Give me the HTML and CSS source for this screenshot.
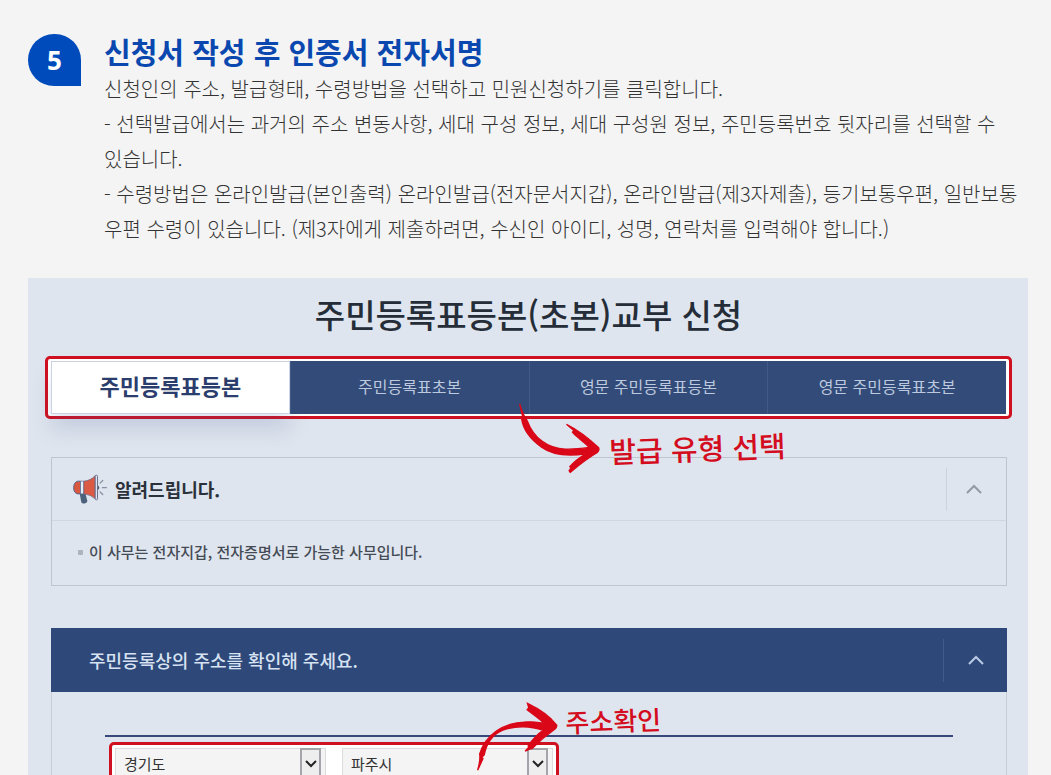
FILE: index.html
```html
<!DOCTYPE html>
<html lang="ko">
<head>
<meta charset="utf-8">
<meta name="viewport" content="width=device-width, initial-scale=1">
<title>신청서 작성 후 인증서 전자서명</title>
<link rel="stylesheet" href="styles.css">
</head>
<body>
<main class="guide">
  <section class="step">
    <span class="step-number">5</span>
    <div class="step-text">
      <h2 class="step-title">신청서 작성 후 인증서 전자서명</h2>
      <p>신청인의 주소, 발급형태, 수령방법을 선택하고 민원신청하기를 클릭합니다.</p>
      <p>- 선택발급에서는 과거의 주소 변동사항, 세대 구성 정보, 세대 구성원 정보, 주민등록번호 뒷자리를 선택할 수 <span class="keep">있습니다.</span></p>
      <p>- 수령방법은 온라인발급(본인출력) 온라인발급(전자문서지갑), 온라인발급(제3자제출), 등기보통우편, 일반보통우편 수령이 있습니다. (제3자에게 제출하려면, 수신인 아이디, 성명, 연락처를 입력해야 합니다.)</p>
    </div>
  </section>

  <section class="panel">
    <h1 class="panel-title">주민등록표등본(초본)교부 신청</h1>
    <div class="tabs-frame">
      <nav class="tabs">
        <button type="button" class="tab active">주민등록표등본</button>
        <button type="button" class="tab">주민등록표초본</button>
        <button type="button" class="tab">영문 주민등록표등본</button>
        <button type="button" class="tab">영문 주민등록표초본</button>
      </nav>
      <div class="note note-type">
        <svg class="note-arrow" viewBox="355 395 250 215" aria-hidden="true">
          <path d="M360 400C367 424 372 437 383 451C402 502 443 534 498 536C526 537 548 534 570 531C551 511 531 500 519 485L524 481L501 461C539 480 573 508 598 532Q601 540 593 547C566 562 539 584 512 606L509 601L515 592L511 589C527 570 544 559 559 550C514 557 462 556 426 530C389 504 370 472 366 445L369 438L360 400Z"/>
        </svg>
        <span class="note-text">발급 유형 선택</span>
      </div>
    </div>

    <article class="notice">
      <header class="notice-head">
        <svg class="megaphone" viewBox="98 100 104 96" aria-hidden="true">
          <path d="M118 159h17l7 26q0 6-8 7h-5q-5 0-6-5z" fill="#4c617c"/>
          <path d="M121 124h-8q-13 3-13 20t13 19h8z" fill="#d9563f" stroke="#56658b" stroke-width="3"/>
          <path d="M121 124h10v39h-10z" fill="#e8edf6" stroke="#56658b" stroke-width="2"/>
          <path d="M131 124q22-2 35-17v71q-13-13-35-15z" fill="#dc5a43" stroke="#56658b" stroke-width="2"/>
          <rect x="166" y="106" width="7" height="75" rx="3" fill="#dfe5ef" stroke="#66708f" stroke-width="3"/>
          <path d="M174 137q9 6 0 14z" fill="#51586e"/>
          <path d="M181 130l8-8M188 144h12M181 157l8 8" fill="none" stroke="#8791a5" stroke-width="4" stroke-linecap="round"/>
        </svg>
        <h2 class="notice-title">알려드립니다.</h2>
        <button type="button" class="toggle" aria-label="알림 접기">
          <svg class="chevron" viewBox="0 0 16 10" aria-hidden="true"><path d="M1 9l7-7 7 7"/></svg>
        </button>
      </header>
      <ul class="notice-list">
        <li>이 사무는 전자지갑, 전자증명서로 가능한 사무입니다.</li>
      </ul>
    </article>

    <article class="address">
      <header class="address-head">
        <h2 class="address-title">주민등록상의 주소를 확인해 주세요.</h2>
        <button type="button" class="toggle" aria-label="주소 접기">
          <svg class="chevron" viewBox="0 0 16 10" aria-hidden="true"><path d="M1 9l7-7 7 7"/></svg>
        </button>
      </header>
      <div class="address-body">
        <div class="fields">
          <div class="fields-frame">
            <div class="select">
              <select aria-label="시도"><option>경기도</option></select>
              <span class="select-arrow"><svg viewBox="0 0 14 10" aria-hidden="true"><path d="M2 2l5 5 5-5"/></svg></span>
            </div>
            <div class="select">
              <select aria-label="시군구"><option>파주시</option></select>
              <span class="select-arrow"><svg viewBox="0 0 14 10" aria-hidden="true"><path d="M2 2l5 5 5-5"/></svg></span>
            </div>
            <div class="note note-address">
              <svg class="note-arrow" viewBox="110 60 250 210" aria-hidden="true">
                <path d="M112 268C117 248 121 237 118 219C136 160 190 126 250 123C276 121 296 123 313 127C294 110 276 97 261 86L266 80L262 67C298 84 331 108 350 132Q351 138 346 143C322 160 297 181 276 203L270 204L255 211L266 199L264 195C277 176 293 159 309 148C272 134 224 133 186 148C156 161 139 187 132 221L125 229L128 233L112 268Z"/>
              </svg>
              <span class="note-text">주소확인</span>
            </div>
          </div>
        </div>
      </div>
    </article>
  </section>
</main>
</body>
</html>
```
FILE: styles.css
```css
* {
  box-sizing: border-box;
}

body {
  margin: 0;
  background: #f4f4f4;
  color: #333;
  font-family: "Noto Sans CJK KR", "Noto Sans", sans-serif;
}

h1,
h2,
p,
ul {
  margin: 0;
  padding: 0;
}

button,
select {
  font-family: inherit;
}

.guide {
  padding: 34px 23px 0 28px;
}

/* Step description */
.step {
  display: flex;
  gap: 23px;
  margin-bottom: 32px;
}

.step-number {
  display: flex;
  flex: none;
  align-items: center;
  justify-content: center;
  width: 53px;
  height: 52px;
  border-radius: 26px 26px 0 26px;
  background: #004bbb;
  color: #fff;
  font-family: "Noto Sans", sans-serif;
  font-size: 26px;
  font-weight: 700;
}

.step-title {
  padding-bottom: 3px;
  color: #0a48b0;
  font-size: 29px;
  font-weight: 700;
  line-height: 34px;
}

.step-text p {
  font-size: 20px;
  font-weight: 300;
  line-height: 35px;
}

.keep {
  white-space: nowrap;
}

/* Application form */
.panel {
  padding: 12px 16px 40px 17px;
  background: #dfe5ee;
}

.panel-title {
  margin-bottom: 18px;
  color: #252d38;
  font-size: 33px;
  font-weight: 500;
  line-height: 48px;
  text-align: center;
}

.tabs-frame {
  position: relative;
  padding: 2px 3px;
  border: 3px solid #cf1020;
  border-radius: 5px;
  background: #fff;
}

.tabs {
  display: grid;
  grid-template-columns: repeat(4, 1fr);
}

.tab {
  height: 53px;
  padding: 0 0 4px;
  border: 0;
  border-left: 1px solid #405985;
  background: #324b78;
  color: #bdc9df;
  font-size: 16px;
}

.tab.active {
  padding-bottom: 6px;
  border: 1px solid #cbd2e2;
  background: #fff;
  box-shadow: 0 16px 20px rgba(70, 90, 150, 0.16);
  color: #2b3d6c;
  font-size: 22px;
  font-weight: 700;
}

/* Handwritten notes over the form */
.note {
  position: absolute;
  z-index: 1;
  display: flex;
  color: #d40c20;
  white-space: nowrap;
}

.note-type {
  top: 43px;
  left: 470px;
  gap: 8px;
}

.note-address {
  top: -45px;
  left: 365px;
  gap: 6px;
}

.note-arrow {
  flex: none;
  width: 83px;
  height: 72px;
  fill: #d90718;
  stroke: #d90718;
  stroke-width: 4;
}

.note-text {
  font-size: 29px;
  font-weight: 500;
  line-height: 40px;
  transform: rotate(-2deg);
}

.note-type .note-text {
  padding-top: 25px;
}

.note-address .note-text {
  font-size: 26px;
}

/* Notice box */
.notice {
  margin: 38px 5px 0 6px;
  border: 1px solid #bfc4cf;
}

.notice-head {
  display: flex;
  align-items: center;
  height: 63px;
  padding-left: 21px;
  border-bottom: 1px solid #d0d5de;
}

.megaphone {
  width: 34px;
  height: 32px;
}

.notice-title {
  margin-left: 8px;
  color: #2b313b;
  font-size: 18px;
  font-weight: 700;
}

.toggle {
  display: flex;
  align-items: center;
  justify-content: center;
  width: 60px;
  height: 43px;
  margin-left: auto;
  padding: 0 6px 0 0;
  border: 0;
  border-left: 1px solid #cdd2dc;
  background: none;
}

.chevron {
  width: 16px;
  height: 10px;
  fill: none;
  stroke: #9499a2;
  stroke-width: 2;
}

.notice-list {
  padding: 19px 24px 21px;
  list-style: none;
}

.notice-list li {
  display: flex;
  align-items: center;
  gap: 6px;
  color: #454b55;
  font-size: 15px;
  font-weight: 500;
  line-height: 24px;
}

.notice-list li::before {
  width: 5px;
  height: 5px;
  margin-left: 2px;
  border-radius: 1px;
  background: #aeb2bd;
  content: "";
}

/* Address box */
.address {
  margin: 42px 5px 0 6px;
  border: 1px solid #c8ced8;
  border-top: 0;
}

.address-head {
  display: flex;
  align-items: center;
  height: 64px;
  margin: 0 -1px;
  padding-left: 38px;
  background: #2d4879;
}

.address-title {
  color: #d7e2f2;
  font-size: 18px;
  font-weight: 500;
}

.address-head .toggle {
  width: 64px;
  padding: 0;
  border-color: #425b8b;
}

.address-head .chevron {
  stroke: #b9cbe6;
}

.address-body {
  padding: 43px 53px 40px;
}

.fields {
  padding: 5px 4px 0;
  border-top: 2px solid #38487a;
}

.fields-frame {
  position: relative;
  display: flex;
  gap: 16px;
  width: 450px;
  max-width: 100%;
  padding: 3px;
  border: 3px solid #cf1020;
  border-radius: 5px;
  background: #fff;
}

.select {
  position: relative;
  flex: 1;
}

.select select {
  width: 100%;
  height: 32px;
  padding: 0 32px 2px 8px;
  border: 1px solid #dcdcdf;
  border-radius: 0;
  appearance: none;
  background: #f4f4f4;
  color: #333;
  font-size: 15px;
}

.select-arrow {
  position: absolute;
  top: 0;
  right: 5px;
  display: flex;
  align-items: center;
  justify-content: center;
  width: 21px;
  height: 32px;
  border: 2px solid #a3a5ab;
  background: #eee;
  pointer-events: none;
}

.select-arrow svg {
  flex: none;
  width: 14px;
  height: 10px;
  fill: none;
  stroke: #222;
  stroke-width: 2;
}
```
